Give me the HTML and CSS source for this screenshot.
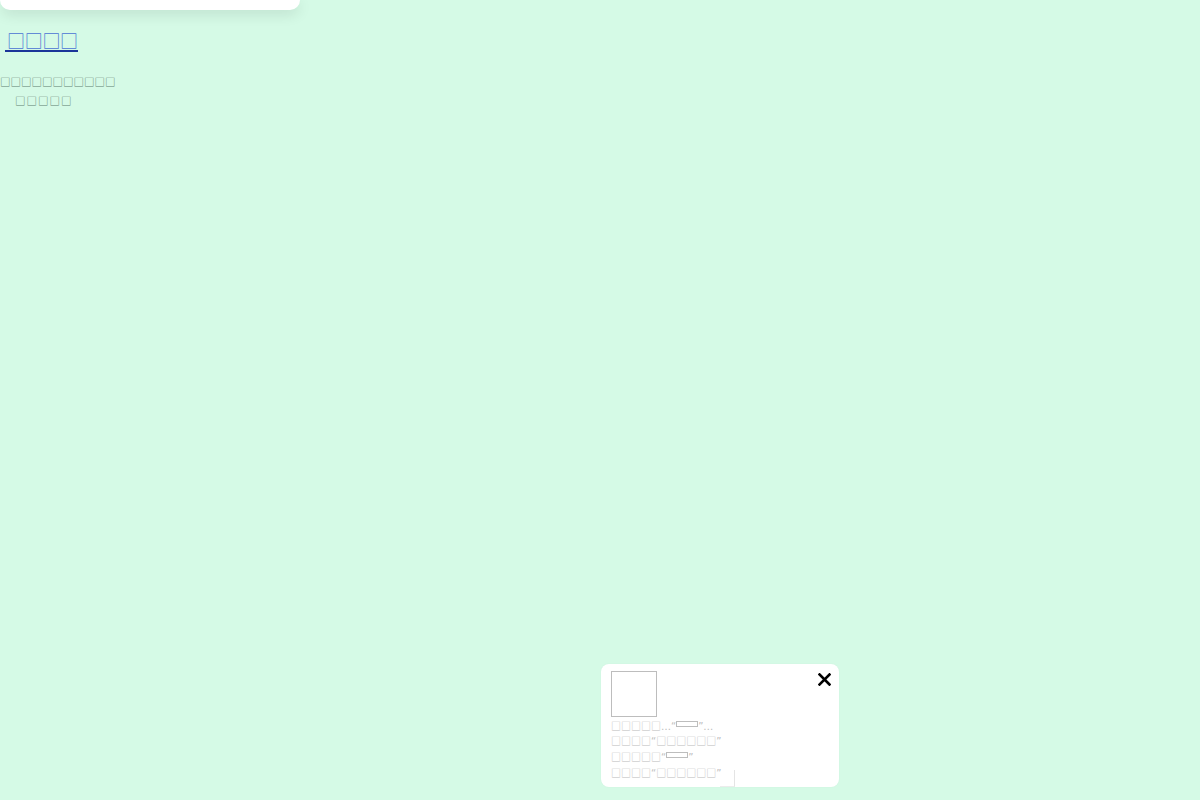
FILE: index.html
```html
<!DOCTYPE html>
<html>
<head>
<meta charset="utf-8">
<link rel="stylesheet" href="styles.css">
</head>
<body>
<div class="topcard"></div>
<div class="main">
  <a class="title" href="#"><span class="g">□□□□</span></a>
  <div class="desc">
    <div class="dl l1">□□□□□□□□□□□</div>
    <div class="dl l2">□□□□□</div>
  </div>
</div>
<div class="popup">
  <svg class="close" width="13" height="13" viewBox="0 0 13 13"><path d="M1.5 1.5 L11.5 11.5 M11.5 1.5 L1.5 11.5" stroke="#000" stroke-width="2.6" stroke-linecap="square"/></svg>
  <div class="thumb"></div>
  <div class="para p1">
    <div class="pl"><span class="g">□□□□□</span>…“<span class="blank"></span>”…</div>
    <div class="pl"><span class="g">□□□□</span>“<span class="g">□□□□□□</span>”</div>
  </div>
  <div class="para p2">
    <div class="pl"><span class="g">□□□□□</span>“<span class="blank"></span>”</div>
    <div class="pl"><span class="g">□□□□</span>“<span class="g">□□□□□□</span>”</div>
  </div>
  <div class="tail"></div>
</div>
</body>
</html>
```
FILE: styles.css
```css
html, body {
  margin: 0;
  padding: 0;
  height: 100%;
}
body {
  background: #d5fae6;
  font-family: "DejaVu Sans", sans-serif;
  position: relative;
  overflow: hidden;
}
.g {
  font-family: "Noto Sans CJK SC", sans-serif;
}
.topcard {
  width: 300px;
  height: 10px;
  background: #fff;
  border-radius: 0 0 12px 12px;
  box-shadow: 0 4px 14px rgba(0, 0, 0, 0.12);
}
.main {
  padding-top: 20px;
}
.title {
  display: block;
  width: max-content;
  margin-left: 5px;
  padding-left: 2px;
  font-size: 18px;
  line-height: 20px;
  height: 20px;
  letter-spacing: -0.3px;
  color: #4a72d4;
  text-decoration: none;
  border-bottom: 2px solid #1b3599;
}
.desc {
  margin-top: 20px;
  font-family: "Noto Sans CJK SC", sans-serif;
  font-size: 10.5px;
  line-height: 19px;
  color: #5f7f71;
}
.dl {
  height: 19px;
  white-space: nowrap;
}
.l1 {
  margin-left: 0;
}
.l2 {
  margin-left: 15px;
  letter-spacing: 1px;
}
.popup {
  position: absolute;
  left: 601px;
  top: 664px;
  width: 228px;
  height: 116px;
  padding: 7px 0 0 10px;
  background: #fff;
  border-radius: 8px;
  box-shadow: 0 0 2px rgba(0, 0, 0, 0.04);
}
.close {
  position: absolute;
  right: 8px;
  top: 9px;
  display: block;
}
.thumb {
  width: 44px;
  height: 44px;
  border: 1px solid #bdbdbd;
}
.para {
  font-size: 10px;
  color: #bdbdbd;
}
.pl {
  white-space: nowrap;
}
.p1 {
  margin-top: 1px;
}
.p1 .pl {
  height: 15px;
  line-height: 15px;
}
.p2 {
  margin-top: 1px;
}
.p2 .pl {
  height: 16px;
  line-height: 16px;
}
.blank {
  display: inline-block;
  width: 20px;
  height: 4px;
  border: 1px solid #bdbdbd;
  vertical-align: 3px;
}
.tail {
  position: absolute;
  left: 119px;
  top: 106px;
  width: 14px;
  height: 16px;
  border-right: 1px solid #e4e4e4;
  border-bottom: 1px solid #ececec;
}
```
